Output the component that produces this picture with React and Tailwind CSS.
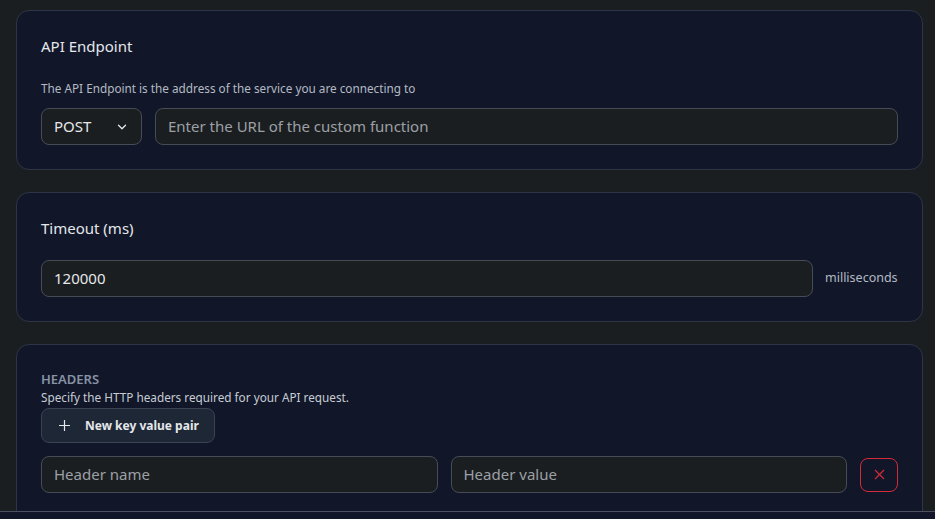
import React from "react";

const font = { fontFamily: '"Noto Sans", "Open Sans", sans-serif' };

function Card({ children, className = "" }) {
  return (
    <div className={`rounded-[13px] border border-[#2e3546] bg-[#111729] px-6 pt-6 ${className}`}>
      {children}
    </div>
  );
}

export default function App() {
  return (
    <div className="min-h-screen bg-[#1b1e20] pl-4 pr-3 pt-[10px] text-[#e5e7eb]" style={font}>
      <div className="flex flex-col gap-[22px]">
        <Card className="pb-6">
          <div className="text-[15px] leading-[22px] text-[#e5e7eb]">API Endpoint</div>
          <div className="mt-[23px] text-[11.75px] leading-[16px] text-[#b4bac4]">
            The API Endpoint is the address of the service you are connecting to
          </div>
          <div className="mt-3 flex gap-[13px]">
            <div className="flex h-[37px] w-[101px] items-center justify-between rounded-lg border border-[#464c56] bg-[#1b1e20] pl-[12px] pr-[12px]">
              <span className="text-[15px] text-[#e5e7eb]">POST</span>
              <svg width="14" height="14" viewBox="0 0 24 24" fill="none" stroke="#e5e7eb" strokeWidth="2.2" strokeLinecap="round" strokeLinejoin="round">
                <path d="m6 9 6 6 6-6" />
              </svg>
            </div>
            <div className="flex h-[37px] flex-1 items-center rounded-lg border border-[#464c56] bg-[#1b1e20] px-[12px]">
              <span className="text-[15px] text-[#9ca0a6]">Enter the URL of the custom function</span>
            </div>
          </div>
        </Card>

        <Card className="pb-6">
          <div className="text-[15px] leading-[22px] text-[#e5e7eb]">Timeout (ms)</div>
          <div className="mt-[21px] flex items-center gap-[12px]">
            <div className="flex h-[37px] flex-1 items-center rounded-lg border border-[#464c56] bg-[#1b1e20] px-[12px]">
              <span className="text-[15px] text-[#e5e7eb]">120000</span>
            </div>
            <span className="w-[73px] text-[12.5px] text-[#b4bac4]">milliseconds</span>
          </div>
        </Card>

        <Card className="pb-10">
          <div className="text-[13px] font-semibold leading-[20px] text-[#8792a5]">HEADERS</div>
          <div className="text-[11.75px] leading-[17px] text-[#c7ccd4]">
            Specify the HTTP headers required for your API request.
          </div>
          <button className="mt-[2px] flex h-[35px] items-center gap-[15px] rounded-lg border border-[#3a4354] bg-[#1e2736] pl-[17px] pr-[15px]">
            <svg width="11" height="11" viewBox="0 0 11 11" fill="none" stroke="#e5e7eb" strokeWidth="1.2">
              <path d="M5.5 0v11M0 5.5h11" />
            </svg>
            <span className="text-[12px] font-bold text-[#e5e7eb]">New key value pair</span>
          </button>
          <div className="mt-[13px] flex items-center gap-[13px]">
            <div className="flex h-[37px] flex-1 items-center rounded-lg border border-[#464c56] bg-[#1b1e20] px-[12px]">
              <span className="text-[15px] text-[#9ca0a6]">Header name</span>
            </div>
            <div className="flex h-[37px] flex-1 items-center rounded-lg border border-[#464c56] bg-[#1b1e20] px-[12px]">
              <span className="text-[15px] text-[#9ca0a6]">Header value</span>
            </div>
            <button className="flex h-[34px] w-[38px] items-center justify-center rounded-lg border border-[#d42a3a] bg-transparent">
              <svg width="11" height="11" viewBox="0 0 11 11" fill="none" stroke="#d42a3a" strokeWidth="1.2">
                <path d="M1 1l9 9M10 1l-9 9" />
              </svg>
            </button>
          </div>
          <div className="h-[60px]" />
        </Card>
      </div>
      <div className="fixed bottom-0 left-0 right-0 h-[8px] border-t border-[#4a5160] bg-[#111729]" />
    </div>
  );
}
